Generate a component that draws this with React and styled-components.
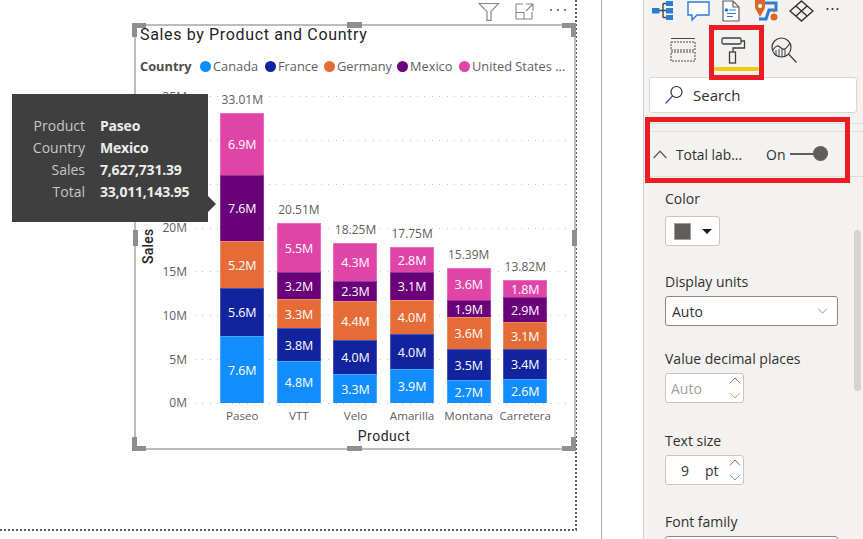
import React from 'react';
import styled, { createGlobalStyle } from 'styled-components';

const Global = createGlobalStyle`
  html, body { margin: 0; padding: 0; background: #fff; overflow: hidden; }
  body { font-family: "Open Sans", "Noto Sans", sans-serif; }
  * { box-sizing: border-box; }
`;

const Page = styled.div`
  width: 863px; height: 539px; display: flex; overflow: hidden; position: relative; background: #fff;
`;
const Canvas = styled.div`
  position: relative; width: 577px; height: 531px; flex: none;
  background:
    repeating-linear-gradient(180deg, #5f5f5f 0 2px, transparent 2px 4px) right top / 2px 100% no-repeat,
    repeating-linear-gradient(90deg, #5f5f5f 0 2px, transparent 2px 4px) left bottom / 100% 2px no-repeat;
`;
const Divider = styled.div`
  width: 1px; height: 539px; margin-left: 24px; flex: none; background: #a9a9a9;
`;

/* ---------- visual ---------- */
const Visual = styled.div`
  position: absolute; left: 134px; top: 24px; width: 442px; height: 426px;
  border: 2px solid #bcbcbc; display: flex; flex-direction: column; padding-left: 4px;
`;
const Handle = styled.div`
  position: absolute; background: #8f8f8f;
  ${p => p.$css}
`;
const Corner = styled.div`
  position: absolute; width: 14px; height: 14px;
  border: 0 solid #8f8f8f;
  border-width: ${p => `${p.$t ? 5 : 0}px ${p.$r ? 5 : 0}px ${p.$b ? 5 : 0}px ${p.$l ? 5 : 0}px`};
  ${p => p.$t ? 'top: -3px;' : 'bottom: -3px;'}
  ${p => p.$l ? 'left: -4px;' : 'right: -2px;'}
`;
const Title = styled.div`
  font: 400 16px/20px Roboto, sans-serif; letter-spacing: 0.65px; color: #252423; margin-top: -1px; height: 20px;
  white-space: nowrap;
`;
const Legend = styled.div`
  display: flex; align-items: center; height: 20px; margin-top: 11px; font-size: 12.8px; color: #605e5c; white-space: nowrap;
`;
const LegendTitle = styled.span`
  font-weight: 700; color: #4f4d4b; margin-right: 7px; font-size: 12.8px; width: 53px;
`;
const LegendItem = styled.span`
  display: inline-flex; align-items: center; width: ${p => p.$w}px;
  &::before {
    content: ""; width: 11px; height: 11px; border-radius: 50%; background: ${p => p.$c}; margin-right: 2px; flex: none;
  }
`;
const PlotRow = styled.div`
  position: relative; margin-top: 20px; height: 308px; margin-left: 7px;
`;
const AxisTitle = styled.div`
  position: absolute; left: -6px; top: 132px; width: 14px; height: 36px;
  writing-mode: vertical-rl; transform: rotate(180deg); text-align: center;
  font: 500 14px/14px Roboto, sans-serif; color: #252423; letter-spacing: .2px;
`;
const GridRows = styled.div`
  position: absolute; inset: 0; display: flex; flex-direction: column; justify-content: space-between;
`;
const GridRow = styled.div`
  height: 1px; display: flex; align-items: center; position: relative;
  &::after {
    content: ""; position: absolute; left: 48px; right: 2px; height: 1px;
    background: repeating-linear-gradient(90deg, #c4c4c4 0 1px, transparent 1px 7.4px);
  }
`;
const Tick = styled.span`
  width: 40px; text-align: right; font-size: 12px; color: #605e5c; line-height: 16px; flex: none;
`;
const Columns = styled.div`
  position: absolute; left: 67px; top: 0; height: 307px; display: grid;
  grid-template-columns: repeat(6, 56.6px); grid-template-rows: 307px;
`;
const Column = styled.div`
  display: flex; flex-direction: column; justify-content: flex-end; align-items: center; min-height: 0;
`;
const BarTotal = styled.div`
  font-size: 12px; line-height: 16px; color: #605e5c; margin-bottom: 5px; white-space: nowrap; flex: none;
`;
const Segment = styled.div`
  width: 44px; height: ${p => p.$h}px; flex: none; background: ${p => p.$c};
  border: 1px solid rgba(255,255,255,.22); border-bottom-width: 0;
  display: flex; align-items: center; justify-content: center;
  color: #fff; font-size: 12.5px; font-weight: 400; letter-spacing: -.1px;
`;
const XLabels = styled.div`
  display: grid; grid-template-columns: repeat(6, 56.6px); margin-left: 74px; margin-top: 3px; height: 18px;
`;
const XLabel = styled.div`
  text-align: center; font-size: 11.6px; line-height: 18px; color: #605e5c; white-space: nowrap;
`;
const XTitle = styled.div`
  font: 400 14px/18px Roboto, sans-serif; letter-spacing: .5px; color: #252423; text-align: center;
  margin-left: 74px; width: 340px; margin-top: 2px;
`;

/* ---------- tooltip ---------- */
const Tooltip = styled.div`
  position: absolute; left: 12px; top: 94px; width: 196px; height: 128px; background: #3f3f3f;
  display: grid; grid-template-columns: 73px auto; column-gap: 15px; grid-auto-rows: 22px;
  padding-top: 21px; font-size: 14px; line-height: 22px;
  &::after {
    content: ""; position: absolute; left: 196px; top: 102px;
    border: 8px solid transparent; border-left-color: #3f3f3f; border-right-width: 0;
  }
`;
const TipLabel = styled.span`
  text-align: right; color: #c6c6c6;
`;
const TipValue = styled.span`
  font-weight: 700; color: #ececec; letter-spacing: -.2px;
`;

const VisualTools = styled.div`
  position: absolute; left: 478px; top: 2px; display: flex; align-items: center; gap: 15px;
`;
const FocusIcon = styled.svg`
  margin-bottom: 2px;
`;
const MoreIcon = styled.svg`
  margin-bottom: 4px;
`;

/* ---------- right panel ---------- */
const Panel = styled.aside`
  position: absolute; left: 643px; top: 0; width: 220px; height: 539px; background: #f3f2f1;
  border-left: 1px solid #cfcfcf; display: flex; flex-direction: column; overflow: hidden;
  & > * { flex: none; }
`;
const TopIcons = styled.div`
  height: 22px; padding-left: 7px; display: flex; align-items: flex-start;
`;
const TopIcon = styled.svg`
  margin-right: ${p => p.$gap}px; flex: none;
`;
const Tabs = styled.div`
  height: 36px; margin-top: 15px; padding-left: 26px; display: flex; align-items: flex-start; gap: 25px; position: relative;
`;
const ActiveBar = styled.div`
  position: absolute; left: 70px; top: 30px; width: 45px; height: 4px; border-radius: 2px; background: #f2c811;
`;
const SearchBox = styled.div`
  margin: 4px 0 0 5px; width: 208px; height: 36px; background: #fff; border: 1px solid #d9d7d5; border-radius: 3px;
  display: flex; align-items: center; padding-left: 14px; gap: 9px; color: #323130; font-size: 15px;
`;
const Rule = styled.div`
  height: 1px; background: #e1dfdd; margin-top: ${p => p.$m}px;
`;
const SectionRow = styled.div`
  height: 44px; display: flex; align-items: center; padding-left: 8px; font-size: 14px; color: #323130;
`;
const SectionName = styled.span`
  margin-left: 8px; width: 90px; white-space: nowrap; font-size: 13.8px;
`;
const ToggleTrack = styled.div`
  width: 38px; height: 2px; background: #605e5c; margin-left: 5px; position: relative;
  &::after {
    content: ""; position: absolute; right: 0; top: -7px; width: 15px; height: 15px; border-radius: 50%; background: #605e5c;
  }
`;
const Fields = styled.div`
  padding-left: 21px; display: flex; flex-direction: column;
`;
const FieldLabel = styled.div`
  font-size: 14px; line-height: 18px; color: #323130; margin-top: ${p => p.$m}px; white-space: nowrap;
`;
const InputBox = styled.div`
  width: ${p => p.$w}px; height: 30px; flex: none; background: #fff; border-radius: 3px; margin-top: ${p => p.$mt || 5}px;
  border: 1px solid ${p => p.$strong ? '#8a8886' : '#c8c6c4'};
  display: flex; align-items: center; font-size: 14px; color: ${p => p.$muted ? '#a19f9d' : '#323130'};
  padding-left: ${p => p.$pl}px; position: relative;
`;
const Swatch = styled.div`
  width: 17px; height: 17px; background: #605e5c; border: 1px solid #a19f9d; margin-right: 11px;
`;
const Caret = styled.div`
  width: 0; height: 0; border: 5px solid transparent; border-top: 5px solid #201f1e; border-bottom-width: 0;
`;
const Spinner = styled.div`
  position: absolute; right: 0px; top: 3px; bottom: 3px; width: 16px; display: flex; flex-direction: column; justify-content: space-between; align-items: center;
`;
const SelectChevron = styled.div`
  position: absolute; right: 9px; top: 11px; display: flex;
`;
const PtText = styled.span`
  margin-left: 16px;
`;
const Scrollbar = styled.div`
  position: absolute; left: 210px; top: 230px; width: 7px; height: 161px; border-radius: 3.5px; background: #d6d4d2;
`;
const RedBox = styled.div`
  position: absolute; left: ${p => p.$x}px; top: ${p => p.$y}px; width: ${p => p.$w}px; height: ${p => p.$h}px;
  border: 5px solid #ed1c24; pointer-events: none;
`;

const Chev = ({ up, c = '#8a8886', w = 12, h = 7 }) => (
  <svg width={w} height={h} viewBox="0 0 12 7" fill="none" stroke={c} strokeWidth="1">
    <path d={up ? 'M1 6.2 6 1l5 5.2' : 'M1 .8 6 6l5-5.2'} />
  </svg>
);

const data = [
  { n: 'Paseo', t: '33.01M', s: [['#e044a7', 62, '6.9M'], ['#6b007b', 66, '7.6M'], ['#e66c37', 47, '5.2M'], ['#12239e', 48, '5.6M'], ['#118dff', 67, '7.6M']] },
  { n: 'VTT', t: '20.51M', s: [['#e044a7', 49, '5.5M'], ['#6b007b', 27, '3.2M'], ['#e66c37', 29, '3.3M'], ['#12239e', 33, '3.8M'], ['#118dff', 42, '4.8M']] },
  { n: 'Velo', t: '18.25M', s: [['#e044a7', 38, '4.3M'], ['#6b007b', 20, '2.3M'], ['#e66c37', 39, '4.4M'], ['#12239e', 34, '4.0M'], ['#118dff', 29, '3.3M']] },
  { n: 'Amarilla', t: '17.75M', s: [['#e044a7', 25, '2.8M'], ['#6b007b', 28, '3.1M'], ['#e66c37', 34, '4.0M'], ['#12239e', 35, '4.0M'], ['#118dff', 34, '3.9M']] },
  { n: 'Montana', t: '15.39M', s: [['#e044a7', 32, '3.6M'], ['#6b007b', 17, '1.9M'], ['#e66c37', 32, '3.6M'], ['#12239e', 31, '3.5M'], ['#118dff', 23, '2.7M']] },
  { n: 'Carretera', t: '13.82M', s: [['#e044a7', 17, '1.8M'], ['#6b007b', 25, '2.9M'], ['#e66c37', 27, '3.1M'], ['#12239e', 30, '3.4M'], ['#118dff', 24, '2.6M']] },
];
const ticks = ['35M', '', ' ', '20M', '15M', '10M', '5M', '0M'];
const legend = [['Canada', '#118dff', 65], ['France', '#12239e', 59], ['Germany', '#e66c37', 73], ['Mexico', '#6b007b', 62], ['United States ...', '#e044a7', 110]];
const tip = [['Product', 'Paseo'], ['Country', 'Mexico'], ['Sales', '7,627,731.39'], ['Total', '33,011,143.95']];

export default function App() {
  return (
    <Page>
      <Global />
      <Canvas>
        <Visual>
          <Corner $t $l /><Corner $t $r /><Corner $b $l /><Corner $b $r />
          <Handle $css="left: 211px; top: -4px; width: 15px; height: 6px;" />
          <Handle $css="left: 211px; bottom: -3px; width: 15px; height: 5px;" />
          <Handle $css="left: -3px; top: 204px; width: 5px; height: 16px;" />
          <Handle $css="right: -3px; top: 204px; width: 5px; height: 16px;" />
          <Title>Sales by Product and Country</Title>
          <Legend>
            <LegendTitle>Country</LegendTitle>
            {legend.map(([n, c, w]) => <LegendItem key={n} $c={c} $w={w}>{n}</LegendItem>)}
          </Legend>
          <PlotRow>
            <AxisTitle>Sales</AxisTitle>
            <GridRows>
              {ticks.map(t => <GridRow key={t}><Tick>{t}</Tick></GridRow>)}
            </GridRows>
            <Columns>
              {data.map(b => (
                <Column key={b.n}>
                  <BarTotal>{b.t}</BarTotal>
                  {b.s.map(([c, h, l]) => <Segment key={c} $c={c} $h={h}>{l}</Segment>)}
                </Column>
              ))}
            </Columns>
          </PlotRow>
          <XLabels>
            {data.map(b => <XLabel key={b.n}>{b.n}</XLabel>)}
          </XLabels>
          <XTitle>Product</XTitle>
        </Visual>
        <VisualTools>
          <svg width="22" height="20" viewBox="0 0 22 20" fill="none" stroke="#8a8886" strokeWidth="1.2">
            <path d="M1 1.5h19.5l-7.5 8.2v8.6H9V9.7z" />
          </svg>
          <FocusIcon width="19" height="17" viewBox="0 0 19 17" fill="none" stroke="#8a8886" strokeWidth="1.1">
            <path d="M8 1H1v15h16V9M1 9.5h8V16M11 1h7v7M18 1l-7 7" />
          </FocusIcon>
          <MoreIcon width="18" height="4" viewBox="0 0 18 4" fill="#5f5f5f">
            <circle cx="2" cy="2" r="1.1" /><circle cx="9" cy="2" r="1.1" /><circle cx="16" cy="2" r="1.1" />
          </MoreIcon>
        </VisualTools>
        <Tooltip>
          {tip.map(([a, b]) => (
            <React.Fragment key={a}>
              <TipLabel>{a}</TipLabel>
              <TipValue>{b}</TipValue>
            </React.Fragment>
          ))}
        </Tooltip>
      </Canvas>
      <Divider />
      <Panel>
        <TopIcons>
          <TopIcon $gap={12} width="24" height="22" viewBox="0 0 24 22">
            <path d="M8 10.5h8M12 3.5v14M12 3.5h4M12 17.5h4" stroke="#444" strokeWidth="1.4" fill="none" />
            <rect x="1" y="8" width="7.5" height="5.5" fill="#2b7cd3" />
            <rect x="15" y="1" width="7" height="5" fill="#2b7cd3" />
            <rect x="15" y="8" width="7" height="5.5" fill="#2b7cd3" />
            <rect x="15" y="15" width="7" height="5" fill="#2b7cd3" />
          </TopIcon>
          <TopIcon $gap={10} width="24" height="22" viewBox="0 0 24 22">
            <path d="M1 2h21v13H10l-5 5v-5H1z" fill="#fff" stroke="#2b7cd3" strokeWidth="1.4" />
          </TopIcon>
          <TopIcon $gap={13} width="20" height="22" viewBox="0 0 20 22">
            <path d="M2 1h10l6 6v14H2z" fill="#fff" stroke="#605e5c" strokeWidth="1.2" />
            <path d="M12 1v6h6" fill="none" stroke="#605e5c" strokeWidth="1.2" />
            <circle cx="5.5" cy="10" r="1.8" fill="#2b7cd3" />
            <path d="M8 10h7M6 13.5h9M6 16.5h6" stroke="#2b7cd3" strokeWidth="1.2" />
          </TopIcon>
          <TopIcon $gap={11} width="24" height="22" viewBox="0 0 24 22">
            <path d="M1 0h10v8l-5 9-5-9z" fill="#d9692b" />
            <circle cx="6" cy="6" r="2" fill="#fff" />
            <path d="M11 3h11v7h-7l-3 9H5" fill="none" stroke="#2b7cd3" strokeWidth="3" />
            <circle cx="20" cy="17" r="3.5" fill="#d9692b" />
            <circle cx="20" cy="11" r="1.3" fill="#d9692b" />
          </TopIcon>
          <TopIcon $gap={12} width="25" height="22" viewBox="0 0 25 22" fill="none" stroke="#323130" strokeWidth="1.4">
            <path d="M12.5 1 24 11 12.5 21 1 11zM7 6l11 10M18 6 7 16" />
          </TopIcon>
          <TopIcon $gap={0} width="13" height="20" viewBox="0 0 13 20" fill="#323130">
            <circle cx="1.5" cy="9" r="1.1" /><circle cx="6.5" cy="9" r="1.1" /><circle cx="11.5" cy="9" r="1.1" />
          </TopIcon>
        </TopIcons>
        <Tabs>
          <svg width="26" height="26" viewBox="0 0 26 26" fill="none" stroke="#4a4a4a" strokeWidth="1" strokeDasharray="2 1">
            <path d="M1 1.5h24" strokeDasharray="none" />
            <rect x="1" y="5" width="24" height="8" />
            <rect x="1" y="15" width="24" height="9" />
          </svg>
          <svg width="25" height="27" viewBox="0 0 25 27" fill="none" stroke="#3f3f3f" strokeWidth="1.3">
            <rect x="1" y="1" width="19" height="6" rx="1.5" />
            <path d="M20 4h3.5v7H12v4" />
            <rect x="8.5" y="15" width="6" height="11" />
          </svg>
          <svg width="26" height="26" viewBox="0 0 26 26" fill="none" stroke="#3f3f3f" strokeWidth="1.2">
            <circle cx="10.5" cy="10.5" r="9.5" />
            <path d="m17.5 17 8 8.5" />
            <path d="M2 13c3-5 5-5 8-2s5 1 9-5" />
            <path d="M5 13v6M8 12v8M11 13v7M14 13v6" strokeWidth="1" />
          </svg>
          <ActiveBar />
        </Tabs>
        <SearchBox>
          <svg width="20" height="20" viewBox="0 0 20 20" fill="none" strokeWidth="1.2">
            <circle cx="12.5" cy="7" r="5.5" stroke="#323130" />
            <path d="M8.5 11 1.5 18.5" stroke="#6b3fa0" />
          </svg>
          Search
        </SearchBox>
        <Rule $m={10} />
        <Rule $m={7} />
        <SectionRow>
          <Chev up w={16} h={9} c="#605e5c" />
          <SectionName>Total lab...</SectionName>
          On
          <ToggleTrack />
        </SectionRow>
        <Rule $m={0} />
        <Fields>
          <FieldLabel $m={13}>Color</FieldLabel>
          <InputBox $w={55} $pl={8} $mt={8}>
            <Swatch /><Caret />
          </InputBox>
          <FieldLabel $m={27}>Display units</FieldLabel>
          <InputBox $w={173} $pl={6} $strong>
            Auto
            <SelectChevron><Chev c="#8a8886" w={11} h={6} /></SelectChevron>
          </InputBox>
          <FieldLabel $m={24}>Value decimal places</FieldLabel>
          <InputBox $w={79} $pl={5} $muted>
            Auto
            <Spinner><Chev up c="#69797e" /><Chev c="#c19c6a" /></Spinner>
          </InputBox>
          <FieldLabel $m={29}>Text size</FieldLabel>
          <InputBox $w={79} $pl={15}>
            9<PtText>pt</PtText>
            <Spinner><Chev up c="#69797e" /><Chev c="#6a9ac1" /></Spinner>
          </InputBox>
          <FieldLabel $m={28}>Font family</FieldLabel>
          <InputBox $w={173} $pl={6} $strong />
        </Fields>
        <Scrollbar />
      </Panel>
      <RedBox $x={709} $y={25} $w={55} $h={55} />
      <RedBox $x={645} $y={117} $w={205} $h={66} />
    </Page>
  );
}
